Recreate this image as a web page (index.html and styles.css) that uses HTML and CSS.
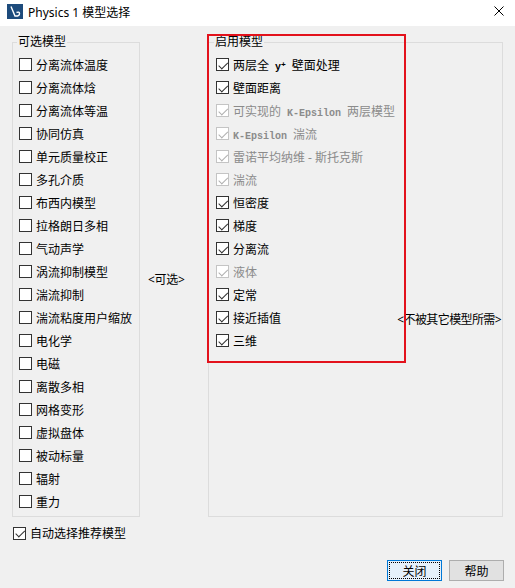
FILE: index.html
```html
<!DOCTYPE html>
<html lang="zh-CN">
<head>
  <meta charset="UTF-8" />
  <title>Physics 1 模型选择</title>
  <link rel="stylesheet" href="styles.css">
</head>
<body>
  <div class="window">
    <div class="titlebar">
      <svg class="app-icon" width="16" height="15" viewBox="0 0 16 15">
        <rect width="16" height="15" fill="#1d4b7c" />
        <path d="M4 2.5 L8 12 Q12.5 12.5 12.5 9.5 Q12.5 7.5 9.5 8.5" fill="none" stroke="#fff" stroke-width="1.4" />
      </svg>
      <span class="title">Physics 1 模型选择</span>
      <svg class="close" width="10" height="10" viewBox="0 0 10 10">
        <path d="M0.5 0.5 L9.5 9.5 M9.5 0.5 L0.5 9.5" stroke="#000" stroke-width="1" />
      </svg>
    </div>

    <div class="dialog">
      <div class="panes">
        <fieldset class="group group-left">
          <legend>可选模型</legend>
          <ul class="list">
            <li><span class="cb"></span><span>分离流体温度</span></li>
            <li><span class="cb"></span><span>分离流体焓</span></li>
            <li><span class="cb"></span><span>分离流体等温</span></li>
            <li><span class="cb"></span><span>协同仿真</span></li>
            <li><span class="cb"></span><span>单元质量校正</span></li>
            <li><span class="cb"></span><span>多孔介质</span></li>
            <li><span class="cb"></span><span>布西内模型</span></li>
            <li><span class="cb"></span><span>拉格朗日多相</span></li>
            <li><span class="cb"></span><span>气动声学</span></li>
            <li><span class="cb"></span><span>涡流抑制模型</span></li>
            <li><span class="cb"></span><span>湍流抑制</span></li>
            <li><span class="cb"></span><span>湍流粘度用户缩放</span></li>
            <li><span class="cb"></span><span>电化学</span></li>
            <li><span class="cb"></span><span>电磁</span></li>
            <li><span class="cb"></span><span>离散多相</span></li>
            <li><span class="cb"></span><span>网格变形</span></li>
            <li><span class="cb"></span><span>虚拟盘体</span></li>
            <li><span class="cb"></span><span>被动标量</span></li>
            <li><span class="cb"></span><span>辐射</span></li>
            <li><span class="cb"></span><span>重力</span></li>
          </ul>
        </fieldset>

        <div class="middle">&lt;可选&gt;</div>

        <fieldset class="group group-right">
          <legend>启用模型</legend>
          <div class="right-inner">
            <ul class="list">
              <li><span class="cb on"></span><span>两层全<span class="mono"> y<span class="plus">+</span> </span>壁面处理</span></li>
              <li><span class="cb on"></span><span>壁面距离</span></li>
              <li class="off"><span class="cb on"></span><span>可实现的<span class="mono"> K-Epsilon </span>两层模型</span></li>
              <li class="off"><span class="cb on"></span><span><span class="mono">K-Epsilon </span>湍流</span></li>
              <li class="off"><span class="cb on"></span><span>雷诺平均纳维 - 斯托克斯</span></li>
              <li class="off"><span class="cb on"></span><span>湍流</span></li>
              <li><span class="cb on"></span><span>恒密度</span></li>
              <li><span class="cb on"></span><span>梯度</span></li>
              <li><span class="cb on"></span><span>分离流</span></li>
              <li class="off"><span class="cb on"></span><span>液体</span></li>
              <li><span class="cb on"></span><span>定常</span></li>
              <li><span class="cb on"></span><span>接近插值</span></li>
              <li><span class="cb on"></span><span>三维</span></li>
            </ul>
            <div class="needed">&lt;不被其它模型所需&gt;</div>
          </div>
        </fieldset>

        <div class="highlight"></div>
      </div>

      <div class="auto-row"><span class="cb on"></span><span>自动选择推荐模型</span></div>

      <div class="buttons">
        <button class="btn btn-focus">关闭</button>
        <button class="btn">帮助</button>
      </div>
    </div>
  </div>
</body>
</html>
```

FILE: styles.css
```css
body {
  margin: 0;
  font-family: "Noto Sans", "Noto Sans CJK SC", sans-serif;
  font-size: 12px;
  color: #000;
  background-color: #f0f0f0;
}
.window {
  width: 515px;
  height: 588px;
  background-color: #f0f0f0;
}
.titlebar {
  height: 26px;
  background-color: #fff;
  display: flex;
  align-items: center;
  padding-left: 7px;
  padding-right: 11px;
}
.app-icon {
  display: block;
  margin-top: -3px;
}
.title {
  margin-left: 5px;
  flex: 1;
  margin-top: -2px;
}
.close {
  display: block;
  margin-top: -4px;
}
.dialog {
  padding: 8px 11px 0 12px;
}
.panes {
  position: relative;
  display: flex;
  height: 483px;
}
.group {
  margin: 0;
  min-width: 0;
  border: 1px solid #dcdcdc;
  box-sizing: border-box;
}
.group legend {
  padding: 0 1px;
  margin-left: -2px;
  line-height: 16px;
}
.group-left {
  width: 128px;
  padding: 0 4px 0 6px;
}
.group-right {
  width: 295px;
  padding: 0 0 0 7px;
}
.list {
  list-style: none;
  margin: 0;
  padding: 3px 0 0 0;
}
.list li {
  height: 23px;
  display: flex;
  align-items: center;
  white-space: pre;
}
.cb {
  position: relative;
  display: inline-block;
  width: 13px;
  height: 13px;
  box-sizing: border-box;
  border: 1px solid #333;
  background-color: #fff;
  margin-right: 4px;
  flex: none;
}
.cb.on::after {
  content: '';
  position: absolute;
  left: 3.5px;
  top: 0.5px;
  width: 3.5px;
  height: 7.5px;
  border: solid #333;
  border-width: 0 1.3px 1.3px 0;
  transform: rotate(45deg);
}
.list li.off {
  color: #8b8b8b;
}
.off .cb {
  border-color: #c4c4c4;
}
.off .cb.on::after {
  border-color: #b0b0b0;
}
.mono {
  font-family: "Liberation Mono", monospace;
  font-size: 10px;
  font-weight: bold;
}
.plus {
  font-size: 8px;
  position: relative;
  top: -3px;
}
.middle {
  width: 68px;
  box-sizing: border-box;
  padding-left: 8px;
  align-self: center;
  margin-top: 6px;
  letter-spacing: -0.3px;
}
.right-inner {
  display: flex;
}
.right-inner .list {
  flex: 1;
}
.needed {
  margin-top: 260px;
  padding-right: 1px;
  white-space: nowrap;
  letter-spacing: -0.6px;
}
.highlight {
  position: absolute;
  left: 195px;
  top: 0;
  width: 199px;
  height: 329px;
  border: 2px solid #e3121c;
  box-sizing: border-box;
  pointer-events: none;
}
.auto-row {
  display: flex;
  align-items: center;
  height: 16px;
  margin-top: 8px;
  padding-left: 1px;
}
.buttons {
  display: flex;
  justify-content: flex-end;
  gap: 7px;
  margin-top: 19px;
}
.btn {
  width: 55px;
  height: 21px;
  font-family: "Noto Sans", "Noto Sans CJK SC", sans-serif;
  font-size: 12px;
  border: 1px solid #adadad;
  background-color: #e1e1e1;
  padding: 0;
  color: #000;
}
.btn-focus {
  border-color: #0078d7;
  background-color: #e5f1fb;
  outline: 1px dotted #000;
  outline-offset: -3px;
}
```
